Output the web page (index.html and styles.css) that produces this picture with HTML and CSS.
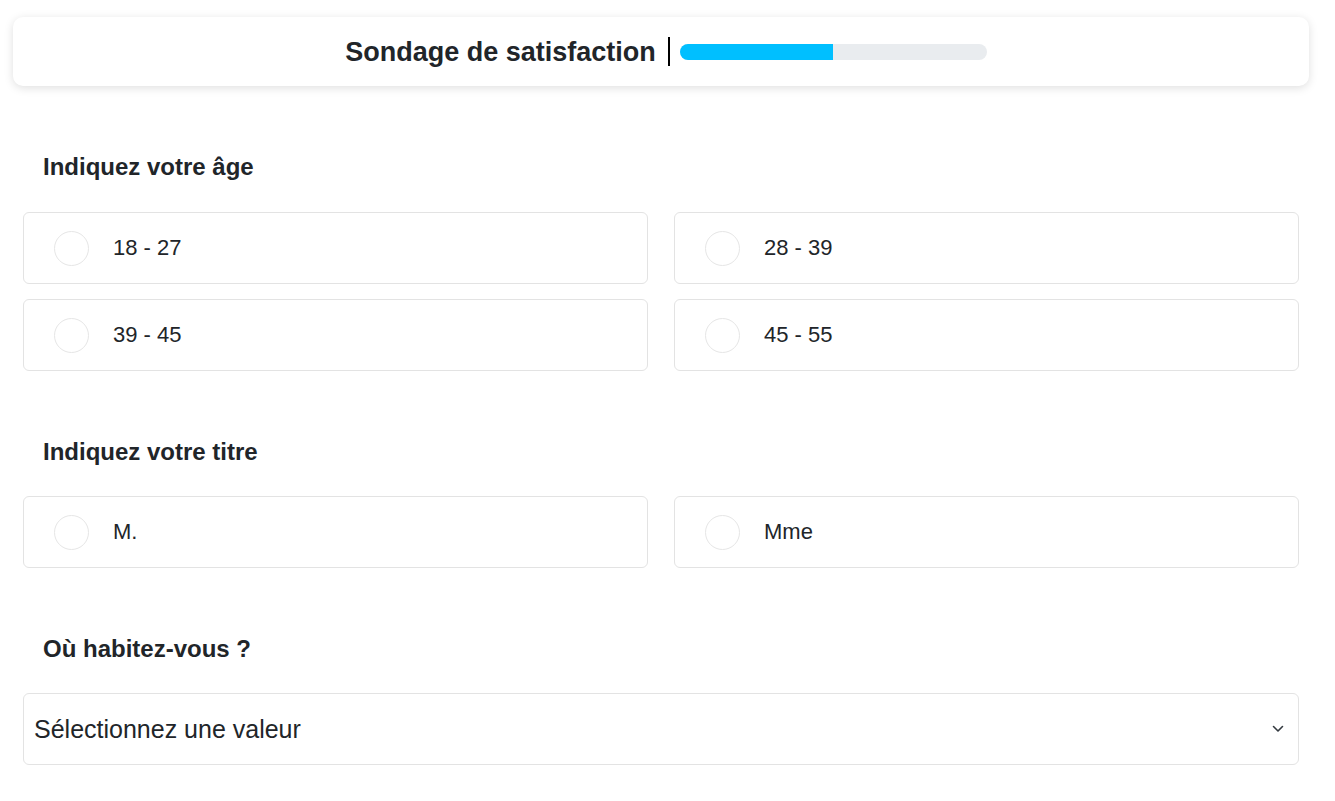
FILE: index.html
```html
<!DOCTYPE html>
<html lang="fr">
<head>
    <meta charset="UTF-8">
    <meta name="viewport" content="width=device-width, initial-scale=1.0">
    <title>Sondage de satisfaction</title>
    <link rel="stylesheet" href="styles.css">
</head>
<body>
    <header class="entete">
        <h1 class="titre">Sondage de satisfaction</h1>
        <span class="separateur"></span>
        <div class="progression">
            <div class="progression-barre" style="width: 50%"></div>
        </div>
    </header>
    <main>
        <form action="#" method="post">
            <section class="question">
                <h2>Indiquez votre âge</h2>
                <div class="choix">
                    <label class="option"><input type="radio" name="age" value="18-27"><span>18 - 27</span></label>
                    <label class="option"><input type="radio" name="age" value="28-39"><span>28 - 39</span></label>
                    <label class="option"><input type="radio" name="age" value="39-45"><span>39 - 45</span></label>
                    <label class="option"><input type="radio" name="age" value="45-55"><span>45 - 55</span></label>
                </div>
            </section>
            <section class="question">
                <h2>Indiquez votre titre</h2>
                <div class="choix">
                    <label class="option"><input type="radio" name="titre" value="m"><span>M.</span></label>
                    <label class="option"><input type="radio" name="titre" value="mme"><span>Mme</span></label>
                </div>
            </section>
            <section class="question">
                <h2>Où habitez-vous ?</h2>
                <div class="liste">
                    <select name="ville" id="ville">
                        <option value="">Sélectionnez une valeur</option>
                        <option value="paris">Paris</option>
                        <option value="lyon">Lyon</option>
                        <option value="marseille">Marseille</option>
                    </select>
                    <svg class="chevron" width="12" height="8" viewBox="0 0 12 8"><path d="M1.5 1.5 6 6l4.5-4.5" fill="none" stroke="#343a40" stroke-width="1.6" stroke-linecap="round" stroke-linejoin="round"/></svg>
                </div>
            </section>
        </form>
    </main>
</body>
</html>
```

FILE: styles.css
```css
*{
    box-sizing: border-box;
    margin: 0;
    padding: 0;
}
body{
    font-family: "Liberation Sans", Arial, sans-serif;
    color: #212529;
    background-color: white;
}
.entete{
    margin: 17px 26px 0 13px;
    height: 69px;
    background-color: white;
    border-radius: 10px;
    box-shadow: 0 2px 10px rgba(0, 0, 0, 0.13);
    display: flex;
    align-items: center;
    justify-content: center;
    padding-left: 10px;
}
.titre{
    font-size: 27px;
    font-weight: bold;
    line-height: 30px;
}
.separateur{
    width: 2px;
    height: 29px;
    background-color: black;
    margin: 0 10px 0 12px;
}
.progression{
    width: 307px;
    height: 16px;
    border-radius: 8px;
    background-color: #e9ecef;
    overflow: hidden;
}
.progression-barre{
    height: 100%;
    background-color: #00bfff;
}
main{
    padding: 0 36px 40px 23px;
}
.question{
    padding-top: 69px;
}
.question h2{
    font-size: 24px;
    line-height: 24px;
    font-weight: bold;
    padding-left: 20px;
    margin-bottom: 32px;
}
.question:first-child h2{
    margin-bottom: 33px;
}
.choix{
    display: grid;
    grid-template-columns: 1fr 1fr;
    column-gap: 26px;
    row-gap: 15px;
}
.option{
    height: 72px;
    border: 1px solid #e3e3e3;
    border-radius: 6px;
    display: flex;
    align-items: center;
    padding-left: 30px;
    font-size: 22px;
    cursor: pointer;
}
.option input{
    appearance: none;
    width: 35px;
    height: 35px;
    border: 1px solid #e6e6e6;
    border-radius: 50%;
    margin-right: 24px;
    cursor: pointer;
}
.option input:checked{
    border: 10px solid #00bfff;
}
.liste{
    position: relative;
}
select{
    appearance: none;
    width: 100%;
    height: 72px;
    border: 1px solid #e3e3e3;
    border-radius: 6px;
    background-color: white;
    font-family: "Liberation Sans", Arial, sans-serif;
    font-size: 25px;
    color: #212529;
    padding-left: 10px;
    outline: none;
}
.chevron{
    position: absolute;
    right: 15px;
    top: 32px;
    pointer-events: none;
}
```
